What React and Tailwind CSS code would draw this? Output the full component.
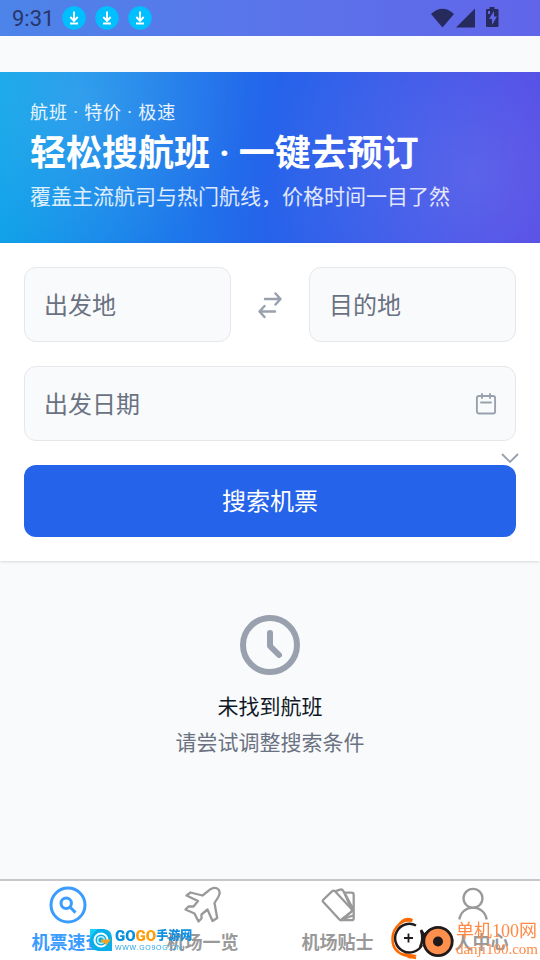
import { useState } from "react";
import clsx from "clsx";

function DownloadBadge() {
  return (
    <svg viewBox="0 0 24 24" className="size-6" aria-hidden="true">
      <circle cx="12" cy="12" r="11.7" fill="#00bfff" />
      <path
        d="M12 5.5v9M8.3 11l3.7 3.8 3.7-3.8M8 17.5h8"
        fill="none"
        stroke="#fff"
        strokeWidth="1.9"
      />
    </svg>
  );
}

function StatusBar() {
  return (
    <header className="flex h-9 items-center bg-linear-to-r from-[#4c84e9] via-[#5a74ea] to-[#6165e9] px-3 text-[#262a5c]">
      <span className="pt-0.5 text-[22px] leading-[34px] text-[#283669]">
        9:31
      </span>
      <div className="ml-2 flex gap-[9px]">
        <DownloadBadge />
        <DownloadBadge />
        <DownloadBadge />
      </div>
      <svg
        viewBox="0 0 68 22"
        className="mr-[29px] ml-auto h-[22px] w-[68px]"
        fill="currentColor"
        aria-hidden="true"
      >
        <path d="M0 7Q11.5-3.5 23 7L11.5 20.5Z" />
        <path d="M44 1.500V20.500H25Z" />
        <path
          fillRule="evenodd"
          d="M58.500 0h5v2h3q1 0 1 1v16q0 1-1 1H56q-1 0-1-1V3q0-1 1-1h2.500ZM57 4v3h2V4ZM63 4l-5 8h3v6l5-8.500h-3Z"
        />
      </svg>
    </header>
  );
}

function Hero() {
  return (
    <section className="mt-9 bg-[radial-gradient(circle_at_15%_15%,rgba(255,255,255,0.12),transparent_35%),radial-gradient(circle_at_88%_60%,rgba(255,255,255,0.12),transparent_45%),linear-gradient(95deg,#0ea5e9_0%,#2563eb_50%,#4f46e5_100%)] px-[30px] pt-[25px] pb-7 text-white">
      <p className="text-lg leading-8 tracking-wider text-white/90">
        航班 · 特价 · 极速
      </p>
      <h1 className="text-4xl leading-[50px] font-bold">
        轻松搜航班 · 一键去预订
      </h1>
      <p className="text-[21px] leading-9 text-white/85">
        覆盖主流航司与热门航线，价格时间一目了然
      </p>
    </section>
  );
}

function Field({ label, value, onChange, children }) {
  return (
    <label className="flex h-[75px] min-w-0 flex-1 items-center rounded-xl border border-gray-200 bg-gray-50 pr-[18px] pl-[19px]">
      <input
        aria-label={label}
        placeholder={label}
        value={value}
        onChange={(event) => onChange(event.target.value)}
        className="w-full min-w-0 bg-transparent pt-0.5 text-2xl text-gray-900 placeholder:text-gray-500 focus:outline-none"
      />
      {children}
    </label>
  );
}

function SearchForm() {
  const [from, setFrom] = useState("");
  const [to, setTo] = useState("");
  const [date, setDate] = useState("");

  function swapCities() {
    setFrom(to);
    setTo(from);
  }

  return (
    <form
      className="flex flex-col gap-6 bg-white p-6 shadow-sm"
      onSubmit={(event) => event.preventDefault()}
    >
      <div className="flex items-center">
        <Field label="出发地" value={from} onChange={setFrom} />
        <button
          type="button"
          aria-label="交换"
          onClick={swapCities}
          className="flex w-[78px] justify-center text-gray-400"
        >
          <svg
            viewBox="0 0 26 28"
            className="h-7 w-[26px]"
            fill="none"
            stroke="currentColor"
            strokeWidth="2.5"
            strokeLinecap="round"
            strokeLinejoin="round"
          >
            <path d="M8 8H23M18.500 2.500 23.500 8l-5 5.500M18 20.500H3M7.500 15 2.500 20.500l5 5.500" />
          </svg>
        </button>
        <Field label="目的地" value={to} onChange={setTo} />
      </div>

      <div className="relative flex">
        <Field label="出发日期" value={date} onChange={setDate}>
          <svg
            viewBox="0 0 22 22"
            className="size-[22px] shrink-0 text-gray-400"
            fill="none"
            stroke="currentColor"
            strokeWidth="1.9"
            strokeLinecap="round"
          >
            <rect x="1.900" y="3" width="18.200" height="17.500" rx="2" />
            <path d="M7 1v4M15 1v4M6 9.500h10" />
          </svg>
        </Field>
        <svg
          viewBox="0 0 18 12"
          className="absolute top-[86px] -right-[3px] h-3 w-[18px] text-gray-400"
          fill="none"
          stroke="currentColor"
          strokeWidth="1.9"
          aria-hidden="true"
        >
          <path d="M1 2l8 8 8-8" />
        </svg>
      </div>

      <button
        type="submit"
        className="h-[72px] rounded-xl bg-[#2563eb] pt-0.5 text-2xl text-white"
      >
        搜索机票
      </button>
    </form>
  );
}

function EmptyState() {
  return (
    <section className="flex flex-1 flex-col items-center pt-[54px] text-[21px] leading-9">
      <svg
        viewBox="0 0 60 60"
        className="mb-3.5 size-[60px] text-gray-400"
        fill="none"
        stroke="currentColor"
        strokeWidth="6"
        strokeLinecap="round"
        strokeLinejoin="round"
        aria-hidden="true"
      >
        <circle cx="30" cy="30" r="27" />
        <path d="M30 18v13l9 9" />
      </svg>
      <h2 className="text-gray-900">未找到航班</h2>
      <p className="text-gray-500">请尝试调整搜索条件</p>
    </section>
  );
}

const tabs = [
  {
    label: "机票速查",
    icon: (
      <>
        <circle cx="20" cy="20" r="17" strokeWidth="3" />
        <circle cx="18.200" cy="18.300" r="5.200" strokeWidth="3" />
        <path d="M22.200 22.300l5.300 5.300" strokeWidth="3" />
      </>
    ),
  },
  {
    label: "机场一览",
    icon: (
      <path d="M19.500 10.500 27.500 4.200Q32.500 1.500 35.500 4.500Q38 7.500 35 12.500L31.500 18 34.200 33 29.500 36 24.500 24.500 18.500 29.500 18.500 33.500 15.500 36.500 11.500 28.500 2.500 24.500 5.500 21.500 10.500 21.500 15 16 3.500 10.500 7.500 7.500Z" />
    ),
  },
  {
    label: "机场贴士",
    icon: (
      <>
        <path d="M5.500 14.500 14 6.300Q15.500 5 17 6.300L33.500 24Q34.500 25.500 33 27L24.500 34.500Q22.500 36 21 34L5.300 17Q4 15.800 5.500 14.500Z" />
        <path d="M17 6.300l5-1.700q2.300-.6 3.500 1.700l9 19.500-11 8.700" />
        <path d="M26.500 7.700H33.500q2.200 0 2.200 2.200V33q0 2.200-2.200 2.200H22.500M27.500 9.500 35 24M24 34.500l11-4" />
      </>
    ),
  },
  {
    label: "个人中心",
    icon: (
      <>
        <circle cx="20" cy="13.300" r="9.500" />
        <path d="M6.300 34.500C7.500 27 13 22.700 20 22.700S32.500 27 33.700 34.500" />
      </>
    ),
  },
];

function TabBar() {
  const [active, setActive] = useState("机票速查");

  return (
    <nav className="sticky bottom-0 grid grid-cols-4 border-t-2 border-[#c8c7cc] bg-white pt-1">
      {tabs.map(({ label, icon }) => (
        <button
          key={label}
          type="button"
          onClick={() => setActive(label)}
          className={clsx(
            "flex flex-col items-center text-lg leading-[35px] font-bold",
            active === label ? "text-[#3b9cff]" : "text-[#999999]"
          )}
        >
          <svg
            viewBox="0 0 40 40"
            className="size-10"
            fill="none"
            stroke="currentColor"
            strokeWidth="2.3"
            strokeLinejoin="round"
            aria-hidden="true"
          >
            {icon}
          </svg>
          {label}
        </button>
      ))}
    </nav>
  );
}

function GogoMark() {
  return (
    <div className="pointer-events-none fixed bottom-2 left-[89px] flex items-center gap-[2px]">
      <svg viewBox="0 0 24 24" className="size-6" aria-hidden="true">
        <path d="M1 1h14q8 1 8 9v13H9Q1 22 1 14Z" fill="#08afe8" />
        <path d="M1 1h8Q3 5 1 12Z" fill="#17d0f5" />
        <circle cx="12" cy="12" r="6.500" fill="none" stroke="#fff" strokeWidth="2" />
        <circle cx="12" cy="12" r="3.300" fill="none" stroke="#c9f1ff" strokeWidth="1.500" />
        <path d="M12 11.500h10l-5 6-1.500-3H12Z" fill="#f4a31c" />
      </svg>
      <div className="flex flex-col">
        <div className="flex items-center text-[15px] leading-4 font-black">
          <span className="text-[#078fe0]">GO</span>
          <span className="text-[#ff9d0a]">GO</span>
          <span className="text-xs leading-4 text-[#118fe0]">手游网</span>
        </div>
        <span className="font-['Liberation_Sans'] text-[7px] leading-2 tracking-widest text-[#27a5e8]">
          WWW.GO9OG.CN
        </span>
      </div>
    </div>
  );
}

function DanjiMark() {
  return (
    <div className="pointer-events-none fixed right-[2px] bottom-0 flex items-end gap-[2px] text-[#ff8a45]">
      <svg viewBox="0 0 64 44" className="h-11 w-16" fill="none" aria-hidden="true">
        <path
          d="M14 5Q5 10 3 18Q0 34 14 39L26 42"
          stroke="#ff6a00"
          strokeWidth="2.4"
        />
        <path d="M8 9Q13-1 23 3L22 6Q14 5 8 9Z" fill="#ff6a00" />
        <path d="M13 37L27 39Q21 45 17 41Z" fill="#ff6a00" />
        <circle cx="19" cy="22" r="14.500" fill="#fff" />
        <path
          d="M26 9.500A14.300 14.300 0 1 0 32 29M31 14Q34 24 30 31M31 14l3 5 6-5"
          stroke="#211a1a"
          strokeWidth="2.500"
        />
        <path d="M14 22h9M18.500 17.500v9" stroke="#211a1a" strokeWidth="1.800" />
        <circle cx="48" cy="25.500" r="14.200" fill="#ff8f4d" stroke="#211a1a" strokeWidth="2.800" />
        <circle cx="48" cy="25.500" r="5" fill="#211a1a" />
      </svg>
      <div className="flex flex-col pb-[2px] font-['Liberation_Serif','Noto_Sans_CJK_SC',serif] leading-[18px]">
        <span className="text-lg leading-[18px]">单机100网</span>
        <span className="text-[15px] leading-[18px]">danji100.com</span>
      </div>
    </div>
  );
}

export default function App() {
  return (
    <div className="flex min-h-screen flex-col bg-gray-50 font-[Roboto,'Noto_Sans_CJK_SC',sans-serif]">
      <StatusBar />
      <main className="flex flex-1 flex-col">
        <Hero />
        <SearchForm />
        <EmptyState />
      </main>
      <TabBar />
      <GogoMark />
      <DanjiMark />
    </div>
  );
}
